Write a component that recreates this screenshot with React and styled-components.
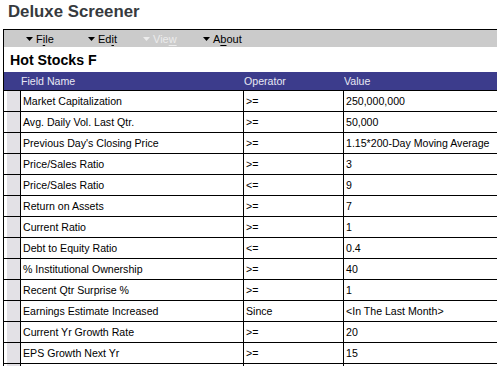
import React from "react";
import styled, { createGlobalStyle } from "styled-components";

const Global = createGlobalStyle`
  html, body { margin: 0; padding: 0; background: #fff; }
  body { font-family: "Liberation Sans", Arial, sans-serif; overflow: hidden; }
`;

const Page = styled.div`
  width: 497px;
  height: 366px;
  overflow: hidden;
`;

const Title = styled.h1`
  margin: 0;
  height: 29px;
  padding-left: 8px;
  font-size: 16.8px;
  font-weight: bold;
  line-height: 23px;
  color: #363a3e;
`;

const Frame = styled.div`
  margin-left: 3px;
  border-left: 1px solid #000;
  border-top: 1px solid #000;
`;

const Toolbar = styled.div`
  height: 17px;
  background: #cbcbcb;
  display: flex;
  align-items: center;
  padding-left: 22px;
  font-size: 11px;
`;

const MenuItem = styled.div`
  width: ${(p) => p.$w}px;
  display: flex;
  align-items: center;
  color: ${(p) => (p.$disabled ? "#ececec" : "#000")};
  u { text-decoration: underline; text-underline-offset: 2px; }
`;

const Arrow = styled.svg`
  width: 7px;
  height: 4px;
  margin-right: 3px;
  fill: currentColor;
`;

const Subtitle = styled.div`
  height: 25px;
  padding-left: 6px;
  font-size: 14.2px;
  font-weight: bold;
  line-height: 26px;
  color: #000;
`;

const Row = styled.div`
  display: grid;
  grid-template-columns: 16px 223px 100px 1fr;
  height: ${(p) => (p.$head ? 18 : 20)}px;
  border-bottom: 1px solid #000;
  background: ${(p) => (p.$head ? "#3c3c8c" : "#fff")};
  color: ${(p) => (p.$head ? "#e8e8f4" : "#000")};
  font-size: 10.6px;
  line-height: ${(p) => (p.$head ? 18 : 20)}px;
`;

const Gutter = styled.div`
  background: ${(p) => (p.$head ? "transparent" : "#e3e1e6")};
  border-left: ${(p) => (p.$head ? 0 : 3)}px solid #fff;
`;

const Cell = styled.div`
  border-left: 1px solid ${(p) => (p.$head ? "transparent" : "#000")};
  padding-left: ${(p) => (p.$head ? 0 : 2)}px;
  white-space: nowrap;
  overflow: hidden;
`;

const rows = [
  ["Market Capitalization", ">=", "250,000,000"],
  ["Avg. Daily Vol. Last Qtr.", ">=", "50,000"],
  ["Previous Day's Closing Price", ">=", "1.15*200-Day Moving Average"],
  ["Price/Sales Ratio", ">=", "3"],
  ["Price/Sales Ratio", "<=", "9"],
  ["Return on Assets", ">=", "7"],
  ["Current Ratio", ">=", "1"],
  ["Debt to Equity Ratio", "<=", "0.4"],
  ["% Institutional Ownership", ">=", "40"],
  ["Recent Qtr Surprise %", ">=", "1"],
  ["Earnings Estimate Increased", "Since", "<In The Last Month>"],
  ["Current Yr Growth Rate", ">=", "20"],
  ["EPS Growth Next Yr", ">=", "15"],
  ["", "", ""],
];

const Tri = () => (
  <Arrow viewBox="0 0 7 4">
    <polygon points="0,0 7,0 3.5,4" />
  </Arrow>
);

export default function App() {
  return (
    <Page>
      <Global />
      <Title>Deluxe Screener</Title>
      <Frame>
        <Toolbar>
          <MenuItem $w={62}><Tri />F<u>i</u>le</MenuItem>
          <MenuItem $w={55}><Tri />Ed<u>i</u>t</MenuItem>
          <MenuItem $w={60} $disabled><Tri />Vie<u>w</u></MenuItem>
          <MenuItem $w={60}><Tri />A<u>b</u>out</MenuItem>
        </Toolbar>
        <Subtitle>Hot Stocks F</Subtitle>
        <Row $head>
          <Gutter $head />
          <Cell $head>Field Name</Cell>
          <Cell $head>Operator</Cell>
          <Cell $head>Value</Cell>
        </Row>
        {rows.map((r, i) => (
          <Row key={i}>
            <Gutter />
            <Cell>{r[0]}</Cell>
            <Cell>{r[1]}</Cell>
            <Cell>{r[2]}</Cell>
          </Row>
        ))}
      </Frame>
    </Page>
  );
}
